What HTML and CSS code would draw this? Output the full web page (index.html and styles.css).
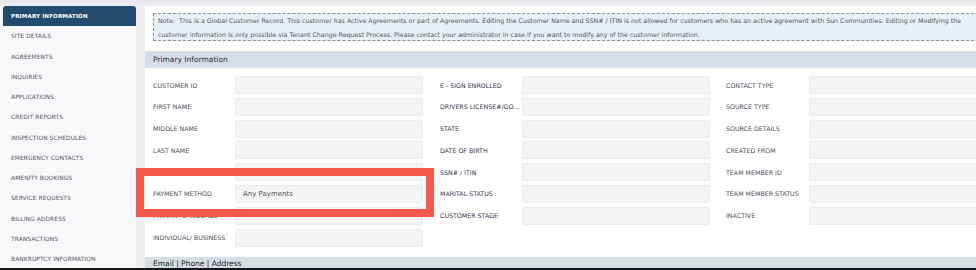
FILE: index.html
```html
<!DOCTYPE html>
<html>
<head>
<meta charset="utf-8">
<link rel="stylesheet" href="styles.css">
</head>
<body>
<div class="page">
  <nav class="sidebar">
    <div class="nav-item active">PRIMARY INFORMATION</div>
    <div class="nav-item">SITE DETAILS</div>
    <div class="nav-item">AGREEMENTS</div>
    <div class="nav-item">INQUIRIES</div>
    <div class="nav-item">APPLICATIONS</div>
    <div class="nav-item">CREDIT REPORTS</div>
    <div class="nav-item">INSPECTION SCHEDULES</div>
    <div class="nav-item">EMERGENCY CONTACTS</div>
    <div class="nav-item">AMENITY BOOKINGS</div>
    <div class="nav-item">SERVICE REQUESTS</div>
    <div class="nav-item">BILLING ADDRESS</div>
    <div class="nav-item">TRANSACTIONS</div>
    <div class="nav-item">BANKRUPTCY INFORMATION</div>
  </nav>
  <main class="main">
    <div class="note">Note:&nbsp; This is a Global Customer Record. This customer has Active Agreements or part of Agreements. Editing the Customer Name and SSN# / ITIN is not allowed for customers who has an active agreement with Sun Communities. Editing or Modifying the<br>customer information is only possible via Tenant Change Request Process. Please contact your administrator in case if you want to modify any of the customer information.</div>
    <div class="section-head">Primary Information</div>
    <div class="form">
      <div class="lbl">CUSTOMER ID</div><div class="inp"></div>
      <div class="lbl c2 dark">E - SIGN ENROLLED</div><div class="inp"></div>
      <div class="lbl c3">CONTACT TYPE</div><div class="inp"></div>

      <div class="lbl">FIRST NAME</div><div class="inp"></div>
      <div class="lbl c2 dark">DRIVERS LICENSE#/GO...</div><div class="inp"></div>
      <div class="lbl c3">SOURCE TYPE</div><div class="inp"></div>

      <div class="lbl">MIDDLE NAME</div><div class="inp"></div>
      <div class="lbl c2 dark">STATE</div><div class="inp"></div>
      <div class="lbl c3">SOURCE DETAILS</div><div class="inp"></div>

      <div class="lbl">LAST NAME</div><div class="inp"></div>
      <div class="lbl c2 dark">DATE OF BIRTH</div><div class="inp"></div>
      <div class="lbl c3">CREATED FROM</div><div class="inp"></div>

      <div class="lbl">PREFERRED NAME</div><div class="inp"></div>
      <div class="lbl c2 dark">SSN# / ITIN</div><div class="inp"></div>
      <div class="lbl c3">TEAM MEMBER ID</div><div class="inp"></div>

      <div class="lbl">PAYMENT METHOD</div><div class="inp">Any Payments</div>
      <div class="lbl c2 dark">MARITAL STATUS</div><div class="inp"></div>
      <div class="lbl c3">TEAM MEMBER STATUS</div><div class="inp"></div>

      <div class="lbl">PRIMARY LANGUAGE</div><div class="inp"></div>
      <div class="lbl c2 dark">CUSTOMER STAGE</div><div class="inp"></div>
      <div class="lbl c3">INACTIVE</div><div class="inp"></div>

      <div class="lbl">INDIVIDUAL/ BUSINESS</div><div class="inp"></div>
    </div>
    <div class="section-head second">Email | Phone | Address</div>
  </main>
  <div class="highlight"></div>
</div>
</body>
</html>
```

FILE: styles.css
```css
html, body {
  margin: 0;
  padding: 0;
}
body {
  background: #ffffff;
  font-family: "DejaVu Sans", "Liberation Sans", sans-serif;
}
.page {
  position: relative;
  display: flex;
  height: 262px;
  padding-top: 6px;
  overflow: hidden;
  background: linear-gradient(#e6e6ea, #efeff2 6px);
  border-bottom: 2px solid #141414;
}
.sidebar {
  width: 136px;
  flex: none;
  background: #f8f8fb;
  display: flex;
  flex-direction: column;
  padding-left: 3px;
  box-sizing: border-box;
}
.nav-item {
  height: 20.25px;
  flex: none;
  display: flex;
  align-items: center;
  padding-left: 8px;
  font-size: 5.9px;
  color: #55555f;
  letter-spacing: 0.1px;
  white-space: nowrap;
}
.nav-item.active {
  background: #234b6e;
  color: #ffffff;
  font-weight: bold;
  font-size: 5.6px;
  border-radius: 3px 3px 0 0;
}
.main {
  flex: 1;
  margin-left: 9px;
  background: #ffffff;
  padding-top: 7px;
  overflow: hidden;
  min-width: 0;
}
.note {
  margin-left: 8px;
  width: 840px;
  height: 26px;
  box-sizing: content-box;
  background: #e9eff6;
  border: 1px dashed #8a8f96;
  padding-left: 4px;
  font-size: 6.3px;
  line-height: 14px;
  color: #555;
  white-space: nowrap;
}
.section-head {
  margin-top: 10px;
  height: 17px;
  background: #d6dde4;
  padding-left: 8px;
  display: flex;
  align-items: center;
  font-size: 7.5px;
  color: #2e2e33;
}
.section-head.second {
  margin-top: 10px;
  align-items: flex-start;
  padding-top: 2px;
  color: #222;
}
.form {
  margin-top: 8px;
  padding-left: 8px;
  display: grid;
  grid-template-columns: 82px 188px 99px 188px 99px 188px;
  grid-auto-rows: 18px;
  row-gap: 3.8px;
}
.lbl {
  display: flex;
  align-items: center;
  font-size: 6.3px;
  color: #4d4d55;
  white-space: nowrap;
}
.lbl.c2 {
  padding-left: 17px;
}
.lbl.c3 {
  padding-left: 16px;
}
.lbl.dark {
  color: #36334f;
}
.inp {
  background: #f4f4f4;
  border: 1px solid #ebebeb;
  border-radius: 2px;
  box-sizing: border-box;
  display: flex;
  align-items: center;
  padding-left: 7px;
  font-size: 7px;
  color: #555;
}
.highlight {
  position: absolute;
  left: 136px;
  top: 168px;
  width: 298px;
  height: 49px;
  box-sizing: border-box;
  border: 8px solid #f5594a;
}
```
